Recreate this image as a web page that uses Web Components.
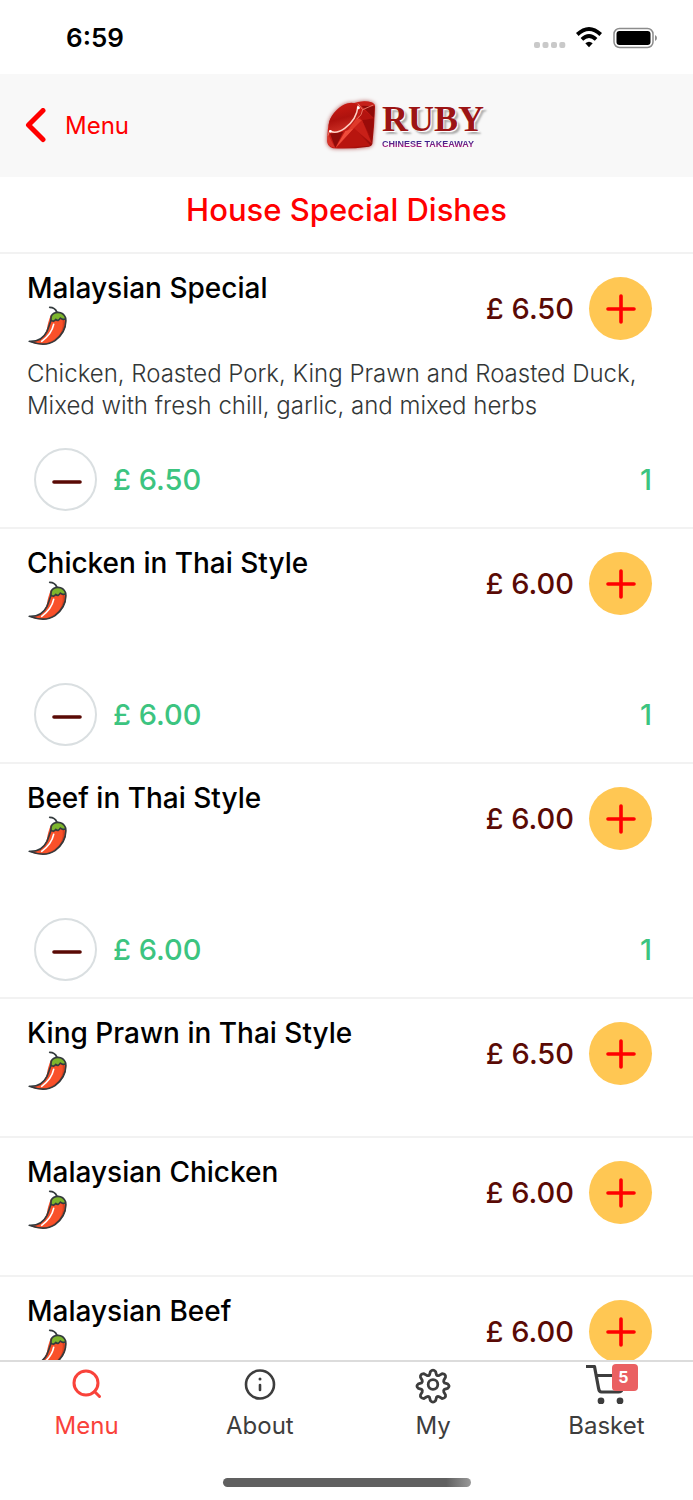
<!DOCTYPE html>
<html lang="en">
<head>
<meta charset="utf-8">
<meta name="viewport" content="width=device-width, initial-scale=1">
<title>Ruby Chinese Takeaway</title>
<style>
  body { margin: 0; background: #fff; color: #000; font-family: Inter, "Liberation Sans", sans-serif; }
</style>
</head>
<body>
<ruby-app>
  <status-bar slot="status" time="6:59"></status-bar>
  <nav-header slot="header" back="Menu"><ruby-logo></ruby-logo></nav-header>
  <dish-section heading="House Special Dishes">
    <dish-item name="Malaysian Special" price="6.50" quantity="1">Chicken, Roasted Pork, King Prawn and Roasted Duck, Mixed with fresh chill, garlic, and mixed herbs</dish-item>
    <dish-item name="Chicken in Thai Style" price="6.00" quantity="1"></dish-item>
    <dish-item name="Beef in Thai Style" price="6.00" quantity="1"></dish-item>
    <dish-item name="King Prawn in Thai Style" price="6.50"></dish-item>
    <dish-item name="Malaysian Chicken" price="6.00"></dish-item>
    <dish-item name="Malaysian Beef" price="6.00"></dish-item>
  </dish-section>
  <tab-bar slot="tabs">
    <tab-link label="Menu" active>
      <svg width="40" height="40" viewBox="0 0 40 40" fill="none" stroke="currentColor" stroke-width="3" stroke-linecap="round"><circle cx="19" cy="19" r="12"/><path d="M27.5 27.5L32.500 32.500"/></svg>
    </tab-link>
    <tab-link label="About">
      <svg width="40" height="40" viewBox="0 0 40 40" fill="none" stroke="currentColor" stroke-width="2.6" stroke-linecap="round"><circle cx="20" cy="20.500" r="14"/><path d="M20 21v5"/><path d="M20 15v.1" stroke-width="3"/></svg>
    </tab-link>
    <tab-link label="My">
      <svg width="40" height="40" viewBox="0 0 40 40" fill="none" stroke="currentColor" stroke-width="2.8" stroke-linejoin="round"><g transform="translate(0 1)"><circle cx="20" cy="19.5" r="4.8"/><path d="M17.4 6.600q2.600-3 5.200 0l.9 3.300q1.200 1.200 2.700.5l2.900-1.700q4 .4 3.400 3.600l-1.700 2.900q-.6 1.700.6 2.700l3.200.9q3 2.300 0 4.600l-3.200.9q-1.200 1-.6 2.700l1.700 2.900q.6 3.200-3.400 3.600l-2.900-1.700q-1.500-.7-2.700.5l-.9 3.300q-2.600 3-5.200 0l-.9-3.300q-1.200-1.200-2.700-.5l-2.900 1.700q-4-.4-3.400-3.600l1.700-2.900q.6-1.700-.6-2.700l-3.200-.9q-3-2.300 0-4.600l3.200-.9q1.200-1 .6-2.700l-1.700-2.900q-.6-3.200 3.400-3.600l2.900 1.700q1.500.7 2.700-.5z"/></g></svg>
    </tab-link>
    <tab-link label="Basket" badge="5">
      <svg width="40" height="40" viewBox="0 0 40 40" fill="none" stroke="currentColor" stroke-width="3.200" stroke-linecap="round" stroke-linejoin="round"><path d="M.5 2.500h8l4 21.500q.6 4 3 4h17q3 0 3.500-2.500l2-14H10.500"/><circle cx="15" cy="37" r="1.800" fill="currentColor"/><circle cx="34" cy="37" r="1.800" fill="currentColor"/></svg>
    </tab-link>
  </tab-bar>
</ruby-app>

<script>
const define = (name, html, fill) => {
  const template = document.createElement('template');
  template.innerHTML = html;
  customElements.define(name, class extends HTMLElement {
    constructor() {
      super();
      this.attachShadow({ mode: 'open' }).append(template.content.cloneNode(true));
    }
    connectedCallback() {
      if (fill) fill(this, this.shadowRoot);
    }
  });
};

define('ruby-app', `
  <style>
    :host { display: flex; flex-direction: column; height: 100vh; overflow: hidden; }
    main { flex: 1; min-height: 0; overflow-y: auto; scrollbar-width: none; }
  </style>
  <slot name="status"></slot>
  <slot name="header"></slot>
  <main><slot></slot></main>
  <slot name="tabs"></slot>
`);

define('status-bar', `
  <style>
    :host { display: flex; align-items: center; justify-content: space-between; padding: 18px 36px 16px 66px; }
    time { font-size: 26px; line-height: 40px; font-weight: 600; }
    svg { display: block; }
  </style>
  <time></time>
  <svg width="124" height="24" viewBox="0 0 124 24" aria-label="Wi-Fi on, battery full" role="img">
    <g fill="#c9c9c9"><rect x="1" y="16" width="6" height="6" rx="2"/><rect x="9.500" y="16" width="6" height="6" rx="2"/><rect x="18" y="16" width="6" height="6" rx="2"/><rect x="26.300" y="16" width="6" height="6" rx="2"/></g>
    <g fill="none" stroke="#000" stroke-width="3.800"><path d="M44.300 8.500Q56-2.500 67.700 8.500"/><path d="M48.900 13.400Q56 6.800 63.100 13.400"/></g>
    <path d="M52.300 17.300Q56 14.200 59.700 17.300L56 21.200z"/>
    <rect x="81" y="2.500" width="39" height="19" rx="5.500" fill="none" stroke="#8c8c8c" stroke-width="1.500"/>
    <rect x="83.500" y="5" width="34" height="14" rx="3"/>
    <path d="M122 9q2 .8 2 3t-2 3z" fill="#8c8c8c"/>
  </svg>
`, (el, root) => { root.querySelector('time').textContent = el.getAttribute('time'); });

define('nav-header', `
  <style>
    :host { display: grid; grid-template-columns: 322fr 371fr; align-items: center; height: 103px; background: #f8f8f8; }
    a { display: flex; align-items: center; gap: 18px; padding-left: 25px; color: #f00; text-decoration: none; font-size: 24px; line-height: 32px; }
    svg { display: block; }
  </style>
  <a href="#menu">
    <svg width="22" height="36" viewBox="0 0 22 36" fill="none" stroke="currentColor" stroke-width="5" stroke-linecap="round" stroke-linejoin="round"><path d="M18 1.500L3.500 16L18 30.500" transform="translate(0 1)"/></svg>
    <span></span>
  </a>
  <slot></slot>
`, (el, root) => { root.querySelector('span').textContent = el.getAttribute('back'); });

define('ruby-logo', `
  <style>
    :host { display: flex; align-items: center; }
    svg { display: block; overflow: visible; filter: drop-shadow(0 0 2px #b05050); }
    div { display: grid; gap: 2px; justify-items: start; }
    b { font: 700 36px/34px "Liberation Serif", serif; color: #9c1414; text-shadow: 1px 1px 0 #fff, 3px 3px 2px #aaa; }
    span { font: 700 9px/12px "Liberation Sans", sans-serif; color: transparent; background: linear-gradient(#2c2590 25%, #b81878 80%); background-clip: text; }
  </style>
  <svg width="60" height="62" viewBox="0 0 180 186" aria-hidden="true">
    <defs>
      <linearGradient id="body" x1="0" y1="0" x2="1" y2="1"><stop offset="0" stop-color="#d8281e"/><stop offset=".55" stop-color="#c21a14"/><stop offset="1" stop-color="#8e0806"/></linearGradient>
      <linearGradient id="table" x1="0" y1="1" x2="1" y2="0"><stop offset="0" stop-color="#d93b2e"/><stop offset=".5" stop-color="#ae120e"/><stop offset="1" stop-color="#cf1c14"/></linearGradient>
    </defs>
    <path d="M108 21q24-5 44 2 8 4 7 12-2 60-8 112-2 6-10 8-56 8-108 5-16-6-17-20 0-40 6-62 20-42 86-57z" fill="url(#body)"/>
    <path d="M110 22q24-4 42 2l4 12-36 10z" fill="#c5201a"/>
    <path d="M118 32L158 34 156 70z" fill="#8f0a08"/>
    <path d="M110 60l14-16 32 26-36 6z" fill="#b4130f"/>
    <path d="M104 68l16 8-24 24-20 8z" fill="#df3a2a"/>
    <path d="M120 76l36-6-6 66z" fill="#9a0b09"/>
    <path d="M120 76l30 70-54-46z" fill="#c82018"/>
    <path d="M70 108l26-8-56 60z" fill="#f04c3a"/>
    <path d="M96 100l50 52-100 6z" fill="#b8150f"/>
    <path d="M24 116l40-6-24 48z" fill="#8f0b09"/>
    <path d="M17 116l22 42q-22-2-23-20z" fill="#d8352a"/>
    <ellipse cx="65" cy="68" rx="55" ry="31" transform="rotate(-45 65 68)" fill="url(#table)"/>
    <path d="M24 108q18 10 44-8 36-26 40-66" fill="none" stroke="#ffd0c4" stroke-width="4.500" stroke-linecap="round"/>
    <path d="M108 26l14 18 32-14M122 44q-2 18-16 26M22 108l-4 14" fill="none" stroke="#f28a78" stroke-width="2.500"/>
    <circle cx="109" cy="38" r="4.500" fill="#fff"/><circle cx="25" cy="109" r="4" fill="#fff"/>
  </svg>
  <div><b>RUBY</b><span>CHINESE TAKEAWAY</span></div>
`);

define('dish-section', `
  <style>
    :host { display: block; }
    h1 { margin: 0; padding: 13px 16px 22px; text-align: center; color: #f00; font-size: 31px; line-height: 40px; font-weight: 500; }
  </style>
  <h1></h1>
  <slot></slot>
`, (el, root) => { root.querySelector('h1').textContent = el.getAttribute('heading'); });

define('dish-item', `
  <style>
    :host { display: block; border-top: 2px solid #f2f2f2; }
    .head { display: flex; align-items: flex-start; padding: 16px 41px 0 27px; }
    .title { flex: 1; }
    h2 { margin: 0; font-size: 28px; line-height: 36px; font-weight: 500; }
    svg { display: block; }
    .buy { display: flex; align-items: center; gap: 15px; padding-top: 7px; color: #5a0a05; }
    .price { font-size: 29px; line-height: 36px; font-weight: 500; }
    button { display: grid; place-items: center; width: 63px; height: 63px; padding: 0; border-radius: 50%; font: inherit; cursor: pointer; }
    .add { border: 0; background: #ffc753; color: #f00; }
    .remove { border: 2px solid #dadfe1; background: #fff; color: #5a0a05; }
    p { margin: 0; padding: 12px 27px 9px; min-height: 24px; color: #333737; font-size: 24px; line-height: 32px; font-weight: 300; }
    .order { display: flex; align-items: center; padding: 17px 41px 16px 34px; color: #3cc480; font-size: 29px; line-height: 36px; font-weight: 500; }
    .order[hidden] { display: none; }
    .sum { flex: 1; padding-left: 16px; }
  </style>
  <div class="head">
    <div class="title">
      <h2></h2>
      <svg width="40" height="40" viewBox="0 0 120 120" role="img" aria-label="Spicy">
        <path d="M71 28Q62 52 60 68Q48 108 7 106Q30 120 62 114Q117 94 118 44Q116 28 108 26Z" fill="#f9512a"/>
        <path d="M108 30Q124 62 88 102Q74 114 48 115Q116 96 106 38Z" fill="#d94020"/>
        <path d="M72 42Q70 24 86 20Q108 16 116 34L116 38Q108 44 100 36Q94 48 86 40Q80 50 72 42Z" fill="#7cb52d"/>
        <path d="M80 55Q74 84 44 106" fill="none" stroke="#fff" stroke-width="5" stroke-linecap="round"/>
        <path d="M68 4Q84 4 90 19M72 42Q70 24 86 20Q108 16 116 36Q120 76 84 104Q54 124 7 106Q44 108 60 76Q70 50 72 42Q80 50 86 40Q94 48 100 36Q108 44 116 37" fill="none" stroke="#333a3d" stroke-width="5" stroke-linejoin="round" stroke-linecap="round"/>
      </svg>
    </div>
    <div class="buy">
      <span class="price"></span>
      <button class="add" type="button"><svg width="32" height="32" viewBox="0 0 32 32" fill="none" stroke="currentColor" stroke-width="3.600" stroke-linecap="round"><path d="M16 3v26M3 16h26"/></svg></button>
    </div>
  </div>
  <p><slot></slot></p>
  <div class="order" hidden>
    <button class="remove" type="button"><svg width="32" height="32" viewBox="0 0 32 32" fill="none" stroke="currentColor" stroke-width="3.600" stroke-linecap="round"><path d="M4 18h26"/></svg></button>
    <span class="sum"></span>
    <span class="count"></span>
  </div>
`, (el, root) => {
  const name = el.getAttribute('name');
  const price = Number(el.getAttribute('price'));
  const find = (s) => root.querySelector(s);
  find('h2').textContent = name;
  find('.price').textContent = '£ ' + price.toFixed(2);
  find('.add').setAttribute('aria-label', 'Add ' + name);
  find('.remove').setAttribute('aria-label', 'Remove ' + name);
  let count = Number(el.getAttribute('quantity') || 0);
  const render = () => {
    find('.order').hidden = count === 0;
    find('.sum').textContent = count ? '£ ' + (price * count).toFixed(2) : '';
    find('.count').textContent = count || '';
  };
  find('.add').onclick = () => { count += 1; render(); };
  find('.remove').onclick = () => { count -= 1; render(); };
  render();
});

define('tab-bar', `
  <style>
    :host { display: block; border-top: 2px solid #dcdcdc; background: #fff; }
    nav { display: grid; grid-template-columns: repeat(4, 1fr); }
    .home { width: 248px; height: 9px; margin: 33px auto 13px; border-radius: 5px; background: linear-gradient(90deg, #606060 90%, #999); }
  </style>
  <nav><slot></slot></nav>
  <div class="home"></div>
`);

define('tab-link', `
  <style>
    :host { display: block; color: #3d3d3d; }
    :host([active]) { color: #f9423a; }
    a { display: grid; justify-items: center; gap: 3px; padding-top: 2px; color: inherit; text-decoration: none; font-size: 24px; line-height: 38px; }
    .icon { position: relative; }
    ::slotted(svg) { display: block; }
    .badge { position: absolute; top: 0; left: 26px; width: 26px; border-radius: 4px; background: #ea6062; color: #fff; font-size: 16px; line-height: 27px; font-weight: 700; text-indent: -4px; text-align: center; }
    .badge[hidden] { display: none; }
  </style>
  <a>
    <span class="icon"><slot></slot><span class="badge" hidden></span></span>
    <span class="label"></span>
  </a>
`, (el, root) => {
  const label = el.getAttribute('label');
  const badge = root.querySelector('.badge');
  root.querySelector('a').href = '#' + label.toLowerCase();
  root.querySelector('.label').textContent = label;
  badge.hidden = !el.hasAttribute('badge');
  badge.textContent = el.getAttribute('badge') || '';
});
</script>
</body>
</html>
